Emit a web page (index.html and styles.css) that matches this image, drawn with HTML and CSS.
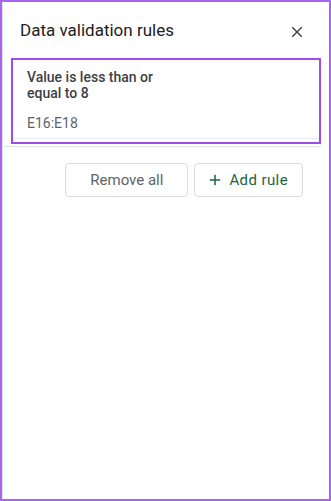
FILE: index.html
```html
<!DOCTYPE html>
<html lang="en">
<head>
    <meta charset="UTF-8">
    <meta name="viewport" content="width=device-width, initial-scale=1.0">
    <title>Data validation rules</title>
    <link rel="stylesheet" href="styles.css">
</head>
<body>

<div class="frame">
    <div class="panel">
        <div class="panel-header">
            <h1>Data validation rules</h1>
            <button class="close-button" title="Close">
                <svg width="18" height="18" viewBox="0 0 24 24"><path d="M19 6.41L17.59 5 12 10.59 6.41 5 5 6.41 10.59 12 5 17.59 6.41 19 12 13.41 17.59 19 19 17.59 13.41 12z"/></svg>
            </button>
        </div>

        <div class="rules-list">
            <div class="rule-card">
                <div class="rule-content">
                    <p class="rule-title">Value is less than or<br>equal to 8</p>
                    <p class="rule-range">E16:E18</p>
                </div>
            </div>
        </div>

        <div class="button-group">
            <button class="outline-button">Remove all</button>
            <button class="outline-button add-button">
                <svg width="18" height="18" viewBox="0 0 24 24"><path d="M19 13h-6v6h-2v-6H5v-2h6V5h2v6h6v2z"/></svg>
                Add rule
            </button>
        </div>
    </div>
</div>

</body>
</html>
```

FILE: styles.css
```css
body { margin: 0; font-family: Roboto, 'Noto Sans', Arial, sans-serif; background: #fff; }
.frame { width: 331px; height: 501px; box-sizing: border-box; border: 2px solid #a866f0; }
.panel { height: 100%; box-sizing: border-box; border-left: 1px solid #e3e3e3; }
.panel-header { display: flex; justify-content: space-between; align-items: flex-start; padding: 16px 23px 0 17px; }
.panel-header h1 { margin: 0; font-size: 17px; line-height: 24px; font-weight: 400; color: #202124; }
.close-button { background: none; border: none; padding: 0; margin-top: 5px; width: 18px; height: 18px; cursor: pointer; }
.close-button svg { display: block; fill: #444746; }
.rules-list { margin: 16px 8px 0 0; padding-bottom: 2px; border-bottom: 1px solid #e3e3e3; }
.rule-card { margin-left: 8px; border: 2px solid #9b4de6; padding: 9px 0 3px; }
.rule-content { padding: 0 14px 7px; border-bottom: 1px solid #ebebeb; }
.rule-title { margin: 0; font-size: 14px; line-height: 16px; font-weight: 500; color: #3c4043; }
.rule-range { margin: 14px 0 0; font-size: 14px; line-height: 16px; color: #5f6368; }
.button-group { display: flex; justify-content: flex-end; gap: 6px; margin-top: 16px; padding-right: 26px; }
.outline-button { display: flex; align-items: center; height: 34px; padding: 0 24px; background: #fff; border: 1px solid #dadce0; border-radius: 4px; font-family: inherit; font-size: 15px; color: #5f6368; cursor: pointer; }
.add-button { padding: 0 14px 0 11px; gap: 5px; letter-spacing: 0.4px; color: #1d6440; }
.add-button svg { fill: #1d6440; }
```
